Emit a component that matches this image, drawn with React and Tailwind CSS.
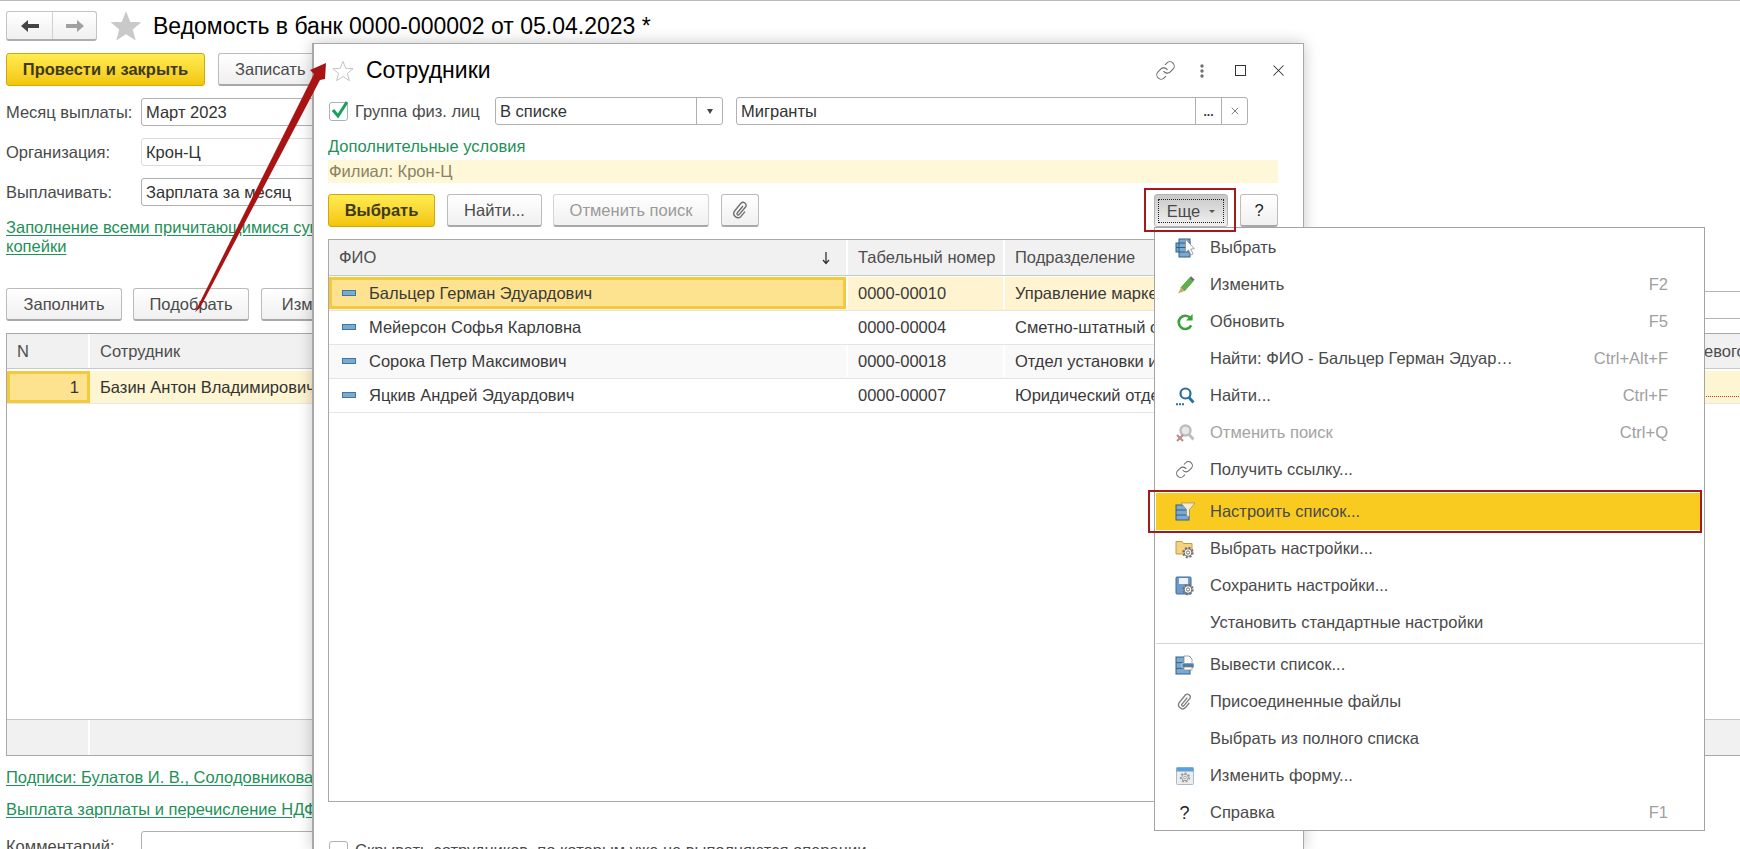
import { Link, X } from "lucide-react";

const Star = ({ outline }) => (
  <svg viewBox="0 0 24 24" className={outline ? "w-[24px] h-[22px]" : "w-[32px] h-[30px]"}>
    <polygon
      points="12,1.5 15,9 23,9.5 16.8,14.6 19,22.5 12,18 5,22.5 7.2,14.6 1,9.5 9,9"
      fill={outline ? "#fff" : "#c9c9c9"}
      stroke={outline ? "#bdbdbd" : "#c9c9c9"}
      strokeWidth="1"
    />
  </svg>
);

const Clip = ({ color = "#707070", size = 20 }) => (
  <svg viewBox="0 0 20 20" width={size} height={size} fill="none" stroke={color} strokeWidth="1.4">
    <path d="M13 6 7.2 13a1.3 1.3 0 0 0 2 1.6L15.5 7a3 3 0 0 0-4.6-3.8L4.6 11a4.2 4.2 0 0 0 6.4 5.4l4-4.8" />
  </svg>
);

const Gear = ({ x, y, r = 4.6, color = "#6f6f6f" }) => (
  <g>
    <circle cx={x} cy={y} r={r} fill="none" stroke={color} strokeWidth="2.2" strokeDasharray="1.9 1.7" />
    <circle cx={x} cy={y} r={r - 0.8} fill="#fff" stroke={color} strokeWidth="1" />
    <circle cx={x} cy={y} r={r * 0.35} fill="none" stroke={color} strokeWidth="1" />
  </g>
);

const Grid = ({ w = 14, h = 18, y = 1 }) => (
  <g>
    <rect x="1" y={y} width={w} height={h} fill="#7fa9cc" stroke="#26638f" />
    <path d={`M1 ${y + h / 3}h${w}M1 ${y + (2 * h) / 3}h${w}`} stroke="#26638f" />
  </g>
);

const icons = {
  select: (
    <svg viewBox="0 0 20 20" width="20" height="20">
      <rect x="1" y="5" width="14" height="9" fill="#7fa9cc" stroke="#26638f" />
      <rect x="4" y="1" width="11" height="18" fill="#7fa9cc" stroke="#26638f" />
      <path d="M1 9.5h14M4 5h11M4 14h11" stroke="#26638f" />
      <path d="M10.5 1v13.5l3-2.6 2.4 5 2.2-1-2.4-4.8 3.6-.4z" fill="#fff" stroke="#8c8c8c" strokeWidth=".8" />
    </svg>
  ),
  edit: (
    <svg viewBox="0 0 20 20" width="20" height="20">
      <path d="M6 12.5 14.5 3l3.6 3.2L9.5 16z" fill="#5fb346" stroke="#3f8a2c" strokeWidth=".6" />
      <path d="M14.5 3l1.5-1.7 3.5 3.2-1.4 1.7z" fill="#5d6b76" />
      <path d="M6 12.5 9.5 16 3 18.5z" fill="#cda86e" />
    </svg>
  ),
  refresh: (
    <svg viewBox="0 0 20 20" width="20" height="20" fill="none">
      <path d="M15.6 6.4a6.6 6.6 0 1 0 .6 7" stroke="#39a23c" strokeWidth="2.6" />
      <path d="M17.6 2v6.6H11z" fill="#39a23c" />
    </svg>
  ),
  find: (
    <svg viewBox="0 0 20 20" width="20" height="20" fill="none">
      <circle cx="10.5" cy="7.5" r="5" stroke="#2b6f9f" strokeWidth="2.2" />
      <path d="m14 11.5 4.5 5" stroke="#2b6f9f" strokeWidth="2.8" />
      <path d="M1 18.2h8" stroke="#2b6f9f" strokeWidth="2" strokeDasharray="2 1" />
    </svg>
  ),
  cancel: (
    <svg viewBox="0 0 20 20" width="20" height="20" fill="none">
      <circle cx="10.5" cy="7.5" r="5" stroke="#bdbdbd" strokeWidth="2.4" fill="#e8e8e8" />
      <path d="m14 11.5 4.5 5" stroke="#bdbdbd" strokeWidth="2.8" />
      <path d="m2 12 6 6M8 12l-6 6" stroke="#b98a8a" strokeWidth="2" />
    </svg>
  ),
  link: <Link size={19} strokeWidth={1.3} color="#6b6b6b" />,
  filter: (
    <svg viewBox="0 0 20 20" width="20" height="20">
      <Grid w={13} h={15} y={3} />
      <path d="M6 1h14l-5.5 6.5V15l-3-1.5v-6z" fill="#f4eecf" stroke="#8f8b74" strokeWidth=".7" />
    </svg>
  ),
  folderGear: (
    <svg viewBox="0 0 20 20" width="20" height="20">
      <path d="M1 2.5h6l1.5 2H17V15H1z" fill="#f4d27f" stroke="#c49a3d" />
      <Gear x={13} y={13.5} />
    </svg>
  ),
  saveGear: (
    <svg viewBox="0 0 20 20" width="20" height="20">
      <rect x="1" y="1" width="15" height="17" rx="1" fill="#6f9bc8" stroke="#3a6a9c" />
      <rect x="4" y="2" width="9" height="6" fill="#eef3f8" />
      <Gear x={13} y={13.5} />
    </svg>
  ),
  print: (
    <svg viewBox="0 0 20 20" width="20" height="20">
      <Grid w={14} h={17} y={2} />
      <path d="M9 1h5l3 3v5H9z" fill="#fff" stroke="#7a7a7a" strokeWidth=".7" />
      <rect x="7" y="8" width="12" height="5" rx="1" fill="#4f7ea6" stroke="#fff" strokeWidth=".6" />
      <rect x="9" y="12" width="8" height="3" fill="#fff" stroke="#7a7a7a" strokeWidth=".6" />
    </svg>
  ),
  clip: <Clip size={19} color="#7d7d7d" />,
  form: (
    <svg viewBox="0 0 20 20" width="20" height="20">
      <rect x="1.5" y="1.5" width="17" height="17" rx="1" fill="#ececec" stroke="#a9bccb" />
      <rect x="1.5" y="1.5" width="17" height="4" fill="#5aa1dc" />
      <Gear x={10} y={11.5} r={4} color="#9a9a9a" />
    </svg>
  ),
  help: <span className="text-[18px] text-[#222] leading-none">?</span>,
};

const menuItems = [
  { icon: "select", label: "Выбрать" },
  { icon: "edit", label: "Изменить", key: "F2" },
  { icon: "refresh", label: "Обновить", key: "F5" },
  { label: "Найти: ФИО - Бальцер Герман Эдуар…", key: "Ctrl+Alt+F" },
  { icon: "find", label: "Найти...", key: "Ctrl+F" },
  { icon: "cancel", label: "Отменить поиск", key: "Ctrl+Q", disabled: true },
  { icon: "link", label: "Получить ссылку..." },
  { icon: "filter", label: "Настроить список...", active: true },
  { icon: "folderGear", label: "Выбрать настройки..." },
  { icon: "saveGear", label: "Сохранить настройки..." },
  { label: "Установить стандартные настройки", sep: true },
  { icon: "print", label: "Вывести список..." },
  { icon: "clip", label: "Присоединенные файлы" },
  { label: "Выбрать из полного списка" },
  { icon: "form", label: "Изменить форму..." },
  { icon: "help", label: "Справка", key: "F1" },
];

const employees = [
  { name: "Бальцер Герман Эдуардович", num: "0000-00010", dept: "Управление маркетинга" },
  { name: "Мейерсон Софья Карловна", num: "0000-00004", dept: "Сметно-штатный отдел" },
  { name: "Сорока Петр Максимович", num: "0000-00018", dept: "Отдел установки и наладки" },
  { name: "Яцкив Андрей Эдуардович", num: "0000-00007", dept: "Юридический отдел" },
];

const Btn = ({ children, className = "" }) => (
  <div
    className={`h-[33px] shrink-0 flex items-center justify-center rounded-[3px] border border-[#bcbcbc] border-b-2 border-b-[#a8a8a8] bg-linear-to-b from-white to-[#f0f0f0] text-[#4a4a4a] ${className}`}
  >
    {children}
  </div>
);

const YellowBtn = ({ children, className = "" }) => (
  <div
    className={`h-[33px] shrink-0 flex items-center justify-center rounded-[3px] border border-[#cfa80f] bg-linear-to-b from-[#ffec4f] to-[#f3c600] font-bold text-[#3f3a16] ${className}`}
  >
    {children}
  </div>
);

const Field = ({ label, value, lightTop }) => (
  <div className="flex items-center h-[28px] mb-[12px]">
    <span className="w-[135px] text-[#4a4a4a]">{label}</span>
    <div
      className={`w-[200px] h-[28px] pl-[4px] flex items-center rounded-[3px] border border-[#b0b0b0] text-[#333] ${lightTop ? "border-[#dcdcdc]" : ""}`}
    >
      {value}
    </div>
  </div>
);

const Background = () => (
  <div className="pt-[10px] pl-[6px]">
    <div className="flex items-center h-[30px]">
      <div className="w-[91px] h-[30px] flex rounded-[3px] border border-[#c4c4c4] border-b-2 border-b-[#adadad] bg-linear-to-b from-white to-[#f0f0f0]">
        <div className="w-[46px] flex items-center justify-center border-r border-[#d0d0d0]">
          <svg viewBox="0 0 18 14" className="w-[18px] h-[14px]" fill="#444">
            <path d="M0 7 7 1v4h11v4H7v4z" />
          </svg>
        </div>
        <div className="flex-1 flex items-center justify-center">
          <svg viewBox="0 0 18 14" className="w-[18px] h-[14px]" fill="#a0a0a0">
            <path d="M18 7 11 1v4H0v4h11v4z" />
          </svg>
        </div>
      </div>
      <div className="ml-[13px] mr-[11px] flex">
        <Star />
      </div>
      <span className="text-[23px] text-black whitespace-nowrap">Ведомость в банк 0000-000002 от 05.04.2023 *</span>
    </div>

    <div className="flex mt-[12px]">
      <YellowBtn className="w-[199px]">Провести и закрыть</YellowBtn>
      <Btn className="w-[120px] ml-[13px] justify-start pl-[16px]">Записать</Btn>
    </div>

    <div className="mt-[12px]">
      <Field label="Месяц выплаты:" value="Март 2023" />
      <Field label="Организация:" value="Крон-Ц" lightTop />
      <Field label="Выплачивать:" value="Зарплата за месяц" />
    </div>

    <div className="mt-[2px] leading-[19px] text-[#1d9157] underline underline-offset-2 whitespace-nowrap">
      Заполнение всеми причитающимися суммами
      <br />
      копейки
    </div>

    <div className="flex mt-[32px] w-[1734px]">
      <Btn className="w-[116px]">Заполнить</Btn>
      <Btn className="w-[116px] ml-[11px]">Подобрать</Btn>
      <Btn className="w-[116px] ml-[12px]">Изменить</Btn>
      <div className="ml-auto w-[40px] h-[28px] mt-[3px] border-y border-[#b4b4b4]" />
    </div>

    <div className="mt-[12px] w-[1740px] h-[423px] flex flex-col border border-[#a8a8a8]">
      <div className="flex h-[35px] shrink-0 bg-[#f1f1f1] border-b border-[#c8c8c8] text-[#4d4d4d]">
        <div className="w-[83px] pl-[10px] flex items-center border-r-2 border-white">N</div>
        <div className="flex-1 pl-[10px] flex items-center">Сотрудник</div>
        <div className="w-[41px] flex items-center">евого</div>
      </div>
      <div className="flex h-[33px] shrink-0 mt-[2px] bg-[#fef5d2] border-b border-[#e8e8e8] text-[#333]">
        <div className="w-[83px] pr-[8px] flex items-center justify-end bg-[#fde28f] border-[3px] border-[#f5c93c]">1</div>
        <div className="flex-1 pl-[10px] flex items-center">Базин Антон Владимирович</div>
        <div className="w-[41px] h-[26px] border-b border-dotted border-[#c0392b]" />
      </div>
      <div className="flex-1" />
      <div className="flex h-[36px] shrink-0 bg-[#f1f1f1] border-t border-[#c4c4c4]">
        <div className="w-[83px] border-r-2 border-white" />
      </div>
    </div>

    <div className="mt-[11px] leading-[20px] text-[#1d9157] underline underline-offset-2 whitespace-nowrap">
      Подписи: Булатов И. В., Солодовникова
    </div>
    <div className="mt-[12px] leading-[20px] text-[#1d9157] underline underline-offset-2 whitespace-nowrap">
      Выплата зарплаты и перечисление НДФЛ
    </div>
    <div className="flex mt-[12px] h-[28px]">
      <span className="w-[135px] text-[#4a4a4a] pt-[3px]">Комментарий:</span>
      <div className="w-[200px] h-[28px] rounded-[3px] border border-[#b0b0b0]" />
    </div>
  </div>
);

const EmployeeRow = ({ e, index }) => {
  const selected = index === 0;
  return (
    <div
      className={`grid grid-cols-[517px_157px_1fr] h-[34px] pb-px border-b border-[#e4e4e4] text-[#3a3a3a] ${selected ? "bg-[#fff4cf]" : ""} ${index === 2 ? "bg-[#f9f9f9]" : ""}`}
    >
      <div
        className={`flex items-center pl-[10px] ${selected ? "bg-[#fde28f] border-[3px] border-[#f5c93c]" : "border-[3px] border-transparent"}`}
      >
        <span className="w-[14px] h-[6px] bg-[#7ba9cf] border border-[#3f77a3]" />
        <span className="ml-[13px]">{e.name}</span>
      </div>
      <div className="flex items-center pl-[10px] border-l-2 border-white">{e.num}</div>
      <div className="flex items-center pl-[10px] border-l-2 border-white whitespace-nowrap">{e.dept}</div>
    </div>
  );
};

const Modal = () => (
  <div className="absolute left-[312px] top-[42px] w-[992px] h-[807px] bg-white border-l-2 border-t border-r border-[#a8a8a8] shadow-[0_0_14px_rgba(0,0,0,0.22)] pl-[14px]">
    <div className="flex items-center h-[53px]">
      <div className="ml-[3px] flex">
        <Star outline />
      </div>
      <span className="ml-[11px] text-[23px] leading-[24px] -mt-[2px] text-black">Сотрудники</span>
      <div className="ml-auto flex items-center text-[#6b6b6b]">
        <Link size={21} strokeWidth={1.2} />
        <svg viewBox="0 0 4 14" className="ml-[24px] w-[4px] h-[14px]" fill="#707070">
          <circle cx="2" cy="2" r="1.7" />
          <circle cx="2" cy="7" r="1.7" />
          <circle cx="2" cy="12" r="1.7" />
        </svg>
        <div className="ml-[31px] w-[11px] h-[11px] border-[1.5px] border-[#333]" />
        <X className="ml-[23px] mr-[15px]" size={19} strokeWidth={1.3} color="#333" />
      </div>
    </div>

    <div className="flex items-center h-[28px]">
      <div className="ml-[1px] relative w-[19px] h-[19px] border border-[#b0b0b0] rounded-[3px]">
        <svg viewBox="0 0 20 20" className="absolute -top-[3px] left-0 w-[20px] h-[20px]" fill="none">
          <path d="M3 10l5 6 9-14" stroke="#17a05d" strokeWidth="3" />
        </svg>
      </div>
      <span className="ml-[7px] w-[140px] text-[#4a4a4a]">Группа физ. лиц</span>
      <div className="w-[228px] h-[28px] flex rounded-[3px] border border-[#b0b0b0] text-[#333]">
        <span className="flex-1 pl-[4px] flex items-center">В списке</span>
        <div className="w-[26px] flex items-center justify-center border-l border-[#b0b0b0]">
          <div className="border-x-[3.5px] border-t-[5px] border-x-transparent border-t-[#444]" />
        </div>
      </div>
      <div className="ml-[13px] w-[512px] h-[28px] flex rounded-[3px] border border-[#b0b0b0] text-[#333]">
        <span className="flex-1 pl-[4px] flex items-center">Мигранты</span>
        <div className="w-[26px] flex items-end justify-center pb-[6px] border-l border-[#b0b0b0] text-[12px] font-bold leading-none">...</div>
        <div className="w-[26px] flex items-center justify-center border-l border-[#b0b0b0]">
          <X size={12} strokeWidth={1.5} color="#555" />
        </div>
      </div>
    </div>

    <div className="mt-[11px] leading-[20px] text-[#1d9157]">Дополнительные условия</div>
    <div className="mt-[4px] w-[950px] h-[23px] pl-[1px] flex items-center bg-[#fef8d9] text-[#8c8262]">Филиал: Крон-Ц</div>

    <div className="mt-[11px] w-[950px] flex">
      <YellowBtn className="w-[107px]">Выбрать</YellowBtn>
      <Btn className="w-[95px] ml-[12px]">Найти...</Btn>
      <Btn className="w-[156px] ml-[11px] text-[#9a9a9a] border-[#d4d4d4]">Отменить поиск</Btn>
      <Btn className="w-[38px] ml-[12px]">
        <Clip />
      </Btn>
      <div className="ml-auto w-[74px] h-[33px] p-[3px] pt-[4px] rounded-[3px] border border-[#b4b4b4] bg-linear-to-b from-[#c8c8c8] to-[#f2f2f2]">
        <div className="h-full flex items-center justify-center gap-[9px] border border-dotted border-[#222] text-[#4a4a4a]">
          Еще
          <div className="border-x-[3px] border-t-[3px] border-x-transparent border-t-[#555]" />
        </div>
      </div>
      <Btn className="w-[38px] ml-[12px] text-[#222]">?</Btn>
    </div>

    <div className="mt-[12px] w-[950px] h-[563px] border border-[#a8a8a8]">
      <div className="grid grid-cols-[517px_157px_1fr] h-[36px] bg-[#f1f1f1] border-b border-[#c8c8c8] text-[#4d4d4d]">
        <div className="flex items-center justify-between pl-[10px] pr-[15px]">
          ФИО
          <svg viewBox="0 0 10 14" className="w-[10px] h-[14px]" fill="none" stroke="#333" strokeWidth="1.3">
            <path d="M5 1v11M2 9l3 3.5L8 9" />
          </svg>
        </div>
        <div className="flex items-center pl-[10px] border-l-2 border-white">Табельный номер</div>
        <div className="flex items-center pl-[10px] border-l-2 border-white">Подразделение</div>
      </div>
      <div className="mt-px">
        {employees.map((e, i) => (
          <EmployeeRow key={e.num} e={e} index={i} />
        ))}
      </div>
    </div>

    <div className="mt-[39px] flex items-start">
      <div className="ml-[1px] w-[19px] h-[19px] border border-[#b0b0b0] rounded-[3px]" />
      <span className="ml-[7px] leading-[18px] text-[#4a4a4a] whitespace-nowrap">Скрывать сотрудников, по которым уже не выполняются операции</span>
    </div>
  </div>
);

const Menu = () => (
  <div className="absolute left-[1154px] top-[226px] w-[551px] h-[604px] pt-px bg-white border border-[#a4a4a4]">
    {menuItems.map((item) => (
      <div key={item.label} className={item.active ? "pt-[5px]" : ""}>
        <div
          className={`flex items-center h-[37px] ml-[1px] mr-[2px] pr-[34px] ${item.active ? "bg-[#f9cb20]" : ""} ${item.disabled ? "text-[#a3a3a3]" : "text-[#4a4a4a]"}`}
        >
          <span className="w-[54px] flex justify-center items-center pl-[3px] shrink-0">{item.icon && icons[item.icon]}</span>
          <span className="whitespace-nowrap">{item.label}</span>
          {item.key && <span className="ml-auto text-[#a0a0a0]">{item.key}</span>}
        </div>
        {item.sep && <div className="mx-[1px] mt-[2px] mb-[2px] h-px bg-[#d6d6cc]" />}
      </div>
    ))}
  </div>
);

const Annotations = () => (
  <>
    <svg viewBox="0 0 1740 849" className="absolute left-0 -top-px w-[1740px] h-[849px]">
      <polygon points="195,312 314,74 310,70 326,63 325,79 320,80 200,308" fill="#a81414" />
    </svg>
    <div className="absolute left-[1144px] top-[187px] w-[92px] h-[44px] border-[2.5px] border-[#a31a1e]" />
    <div className="absolute left-[1148px] top-[489px] w-[554px] h-[43px] border-[2.5px] border-[#a31a1e]" />
  </>
);

export default function App() {
  return (
    <div className="relative w-[1740px] h-[849px] overflow-hidden bg-white border-t border-[#bcbcbc] font-['Liberation_Sans',Arial,sans-serif] text-[16.5px]">
      <Background />
      <Modal />
      <Menu />
      <Annotations />
    </div>
  );
}
